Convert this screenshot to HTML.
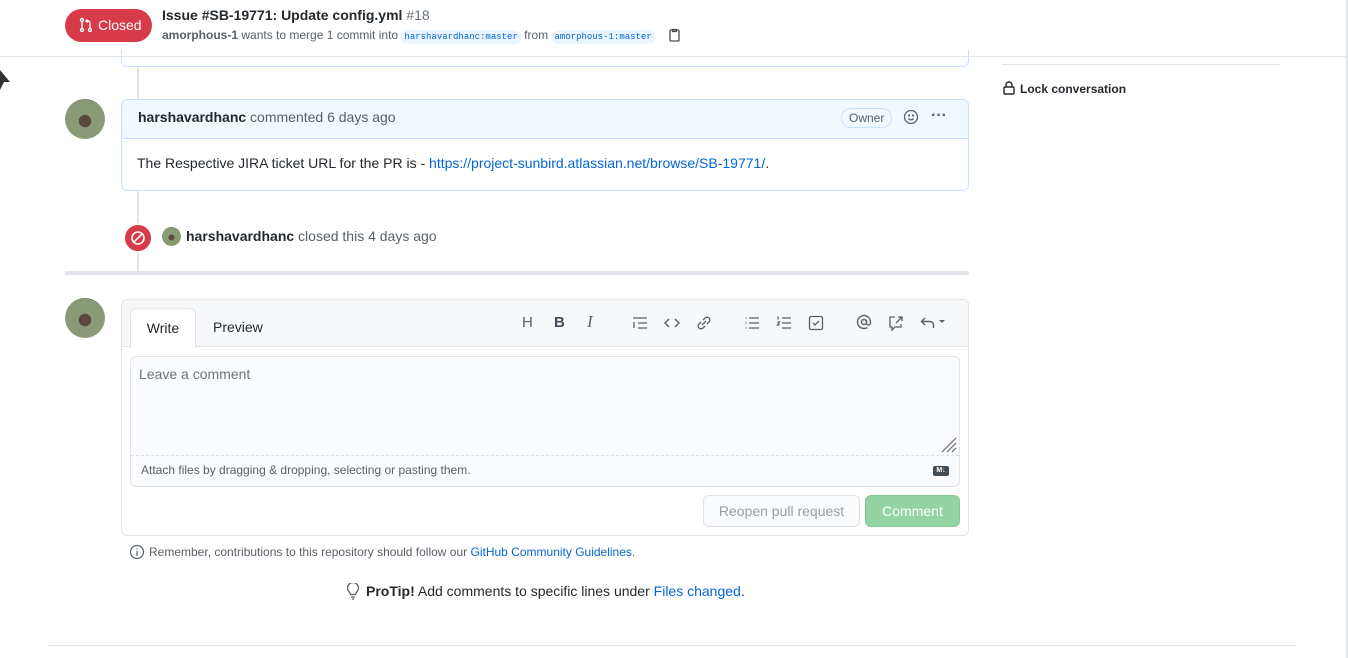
<!DOCTYPE html>
<html><head><meta charset="utf-8"><style>
*{box-sizing:border-box;margin:0;padding:0}
body{width:1348px;height:658px;overflow:hidden;background:#fff;font-family:"Liberation Sans",sans-serif;font-size:14px;color:#24292e;position:relative}
.a{position:absolute}
.av{position:absolute;width:40px;height:40px;border-radius:50%;background:radial-gradient(circle at 50% 55%,#5a4a3c 0 20%,#8a9a76 22% 70%,#6d7e62 72%)}
.code{font-family:"Liberation Mono",monospace;font-size:9px;color:#0366d6;background:#eaf5ff;border-radius:6px;padding:2px 3px}
.ic{position:absolute;top:314px;color:#586069;font-size:15px}
</style></head><body>
<div class="a" style="left:0;top:56px;width:1348px;height:1px;background:#e1e4e8"></div>
<div class="a" style="left:65px;top:9px;width:87px;height:33px;border-radius:17px;background:#d73a49;color:#fff;font-size:14px;line-height:33px;padding-left:33px">Closed</div>
<svg class="a" style="left:78px;top:17px" width="16" height="16" viewBox="0 0 16 16" fill="none" stroke="#fff" stroke-width="1.4"><circle cx="4" cy="3" r="1.5"/><circle cx="4" cy="13" r="1.5"/><circle cx="12" cy="13" r="1.5"/><path d="M4 4.5v7M12 11.5V6a2 2 0 0 0-2-2H8M9.5 2.5L8 4l1.5 1.5"/></svg>
<div class="a" style="left:162px;top:7px;font-size:14px;font-weight:bold">Issue #SB-19771: Update config.yml <span style="font-weight:normal;color:#6a737d">#18</span></div>
<div class="a" style="left:162px;top:28px;font-size:12px;color:#586069"><b style="color:#586069">amorphous-1</b> wants to merge 1 commit into <span class="code">harshavardhanc:master</span> from <span class="code">amorphous-1:master</span></div>
<svg class="a" style="left:668px;top:28px" width="14" height="14" viewBox="0 0 14 14" fill="none" stroke="#444d56" stroke-width="1.3"><rect x="2" y="2" width="9" height="11" rx="1"/><path d="M4.5 1.5h4v2h-4z"/></svg>
<div class="a" style="left:1346px;top:0;width:2px;height:658px;background:#e1e4e8"></div>
<svg class="a" style="left:0;top:70px" width="12" height="22"><path d="M0 0L10 12H4L0 20z" fill="#333"/></svg>
<div class="a" style="left:121px;top:50px;width:848px;height:17px;border:1px solid #c8e1ff;border-top:none;border-radius:0 0 6px 6px"></div>
<div class="a" style="left:137px;top:67px;width:2px;height:205px;background:#e1e4e8"></div>
<div class="a" style="left:1002px;top:64px;width:279px;height:1px;background:#e1e4e8"></div>
<svg class="a" style="left:1003px;top:81px" width="12" height="14" viewBox="0 0 12 14" fill="none" stroke="#24292e" stroke-width="1.4"><rect x="1" y="6" width="10" height="7" rx="1"/><path d="M3 6V4a3 3 0 0 1 6 0v2"/></svg>
<div class="a" style="left:1020px;top:82px;font-size:12px;font-weight:bold">Lock conversation</div>
<div class="av" style="left:65px;top:99px"></div>
<div class="a" style="left:121px;top:99px;width:848px;height:92px;border:1px solid #c8e1ff;border-radius:6px;background:#fff"></div>
<div class="a" style="left:122px;top:100px;width:846px;height:39px;background:#f1f8ff;border-bottom:1px solid #c8e1ff;border-radius:6px 6px 0 0"></div>
<div class="a" style="left:138px;top:109px;font-size:14px;color:#586069"><b style="color:#24292e">harshavardhanc</b> commented 6 days ago</div>
<div class="a" style="left:841px;top:108px;height:20px;padding:0 7px;border:1px solid #c8e1ff;border-radius:10px;font-size:12px;line-height:18px;color:#586069">Owner</div>
<svg class="a" style="left:903px;top:109px" width="16" height="16" viewBox="0 0 16 16" fill="none" stroke="#586069" stroke-width="1.3"><circle cx="8" cy="8" r="6.5"/><path d="M5.5 9.5a3 3 0 0 0 5 0"/><circle cx="6" cy="6.5" r=".5" fill="#586069"/><circle cx="10" cy="6.5" r=".5" fill="#586069"/></svg>
<div class="a" style="left:931px;top:107px;font-size:16px;color:#586069;font-weight:bold">···</div>
<div class="a" style="left:137px;top:155px;font-size:14px">The Respective JIRA ticket URL for the PR is - <span style="color:#0366d6">https://project-sunbird.atlassian.net/browse/SB-19771/</span>.</div>
<div class="a" style="left:123px;top:223px;width:30px;height:30px;border-radius:50%;background:#d73a49;border:2px solid #fff"></div>
<svg class="a" style="left:130px;top:230px" width="16" height="16" viewBox="0 0 16 16" fill="none" stroke="#fff" stroke-width="1.6"><circle cx="8" cy="8" r="6"/><path d="M3.8 12.2l8.4-8.4"/></svg>
<div class="av" style="left:162px;top:227px;width:19px;height:19px"></div>
<div class="a" style="left:186px;top:228px;font-size:14px;color:#586069"><b style="color:#24292e">harshavardhanc</b> closed this 4 days ago</div>
<div class="a" style="left:65px;top:271px;width:904px;height:4px;background:#e1e4e8"></div>
<div class="av" style="left:65px;top:298px"></div>
<div class="a" style="left:121px;top:299px;width:848px;height:237px;border:1px solid #e1e4e8;border-radius:6px;background:#fff"></div>
<div class="a" style="left:122px;top:300px;width:846px;height:47px;background:#f6f8fa;border-bottom:1px solid #e1e4e8;border-radius:6px 6px 0 0"></div>
<div class="a" style="left:130px;top:308px;width:66px;height:40px;background:#fff;border:1px solid #e1e4e8;border-bottom:none;border-radius:6px 6px 0 0;text-align:center;line-height:38px">Write</div>
<div class="a" style="left:213px;top:319px">Preview</div>
<div class="ic" style="left:522px">H</div>
<div class="ic" style="left:554px;font-weight:bold;color:#444d56">B</div>
<div class="ic" style="left:587px;font-style:italic;font-family:'Liberation Serif',serif;font-size:17px;top:312px">I</div>
<svg class="a" style="left:632px;top:315px" width="16" height="16" viewBox="0 0 16 16" fill="none" stroke="#586069" stroke-width="1.3"><path d="M1 3h14M6 8h9M6 13h9M2 7v6"/></svg>
<svg class="a" style="left:664px;top:315px" width="16" height="16" viewBox="0 0 16 16" fill="none" stroke="#586069" stroke-width="1.4"><path d="M5 4L1 8l4 4M11 4l4 4-4 4"/></svg>
<svg class="a" style="left:696px;top:315px" width="16" height="16" viewBox="0 0 16 16" fill="none" stroke="#586069" stroke-width="1.3"><path d="M7 5l2-2a2.8 2.8 0 0 1 4 4l-2 2M9 11l-2 2a2.8 2.8 0 0 1-4-4l2-2M6 10l4-4"/></svg>
<svg class="a" style="left:744px;top:315px" width="16" height="16" viewBox="0 0 16 16" fill="none" stroke="#586069" stroke-width="1.3"><path d="M5 3h10M5 8h10M5 13h10M1.5 3h1M1.5 8h1M1.5 13h1"/></svg>
<svg class="a" style="left:776px;top:315px" width="16" height="16" viewBox="0 0 16 16" fill="none" stroke="#586069" stroke-width="1.3"><path d="M6 3h9M6 8h9M6 13h9M2 1.5v3M1.5 7h2l-2 3h2"/></svg>
<svg class="a" style="left:808px;top:315px" width="16" height="16" viewBox="0 0 16 16" fill="none" stroke="#586069" stroke-width="1.3"><rect x="1.5" y="1.5" width="13" height="13" rx="1.5"/><path d="M5 8l2 2 4-4"/></svg>
<svg class="a" style="left:856px;top:314px" width="16" height="16" viewBox="0 0 16 16" fill="none" stroke="#586069" stroke-width="1.4"><circle cx="8" cy="8" r="2.5"/><path d="M10.5 6v3a2 2 0 0 0 4 0V8a6.5 6.5 0 1 0-3 5.5"/></svg>
<svg class="a" style="left:888px;top:315px" width="16" height="16" viewBox="0 0 16 16" fill="none" stroke="#586069" stroke-width="1.3"><path d="M7 2H2v10h2v3l3-3h6V9M10 2h4v4M14 2L8 8"/></svg>
<svg class="a" style="left:920px;top:315px" width="28" height="16" viewBox="0 0 28 16" fill="none" stroke="#586069" stroke-width="1.4"><path d="M5 3L1.5 6.5 5 10M1.5 6.5H10a3.5 3.5 0 0 1 3.5 3.5v3"/><path d="M19 5h6l-3 3z" fill="#586069" stroke="none"/></svg>
<div class="a" style="left:130px;top:356px;width:830px;height:131px;background:#fafbfc;border:1px solid #e1e4e8;border-radius:6px"></div>
<div class="a" style="left:131px;top:455px;width:828px;height:1px;border-top:1px dashed #dfe2e5"></div>
<div class="a" style="left:139px;top:366px;color:#6a737d">Leave a comment</div>
<svg class="a" style="left:940px;top:437px" width="18" height="16"><path d="M2 15L16 1M7 15L16 6M12 15L16 11" stroke="#666" stroke-width="1.2"/></svg>
<div class="a" style="left:141px;top:463px;font-size:12px;color:#586069">Attach files by dragging &amp; dropping, selecting or pasting them.</div>
<div class="a" style="left:933px;top:466px;width:16px;height:10px;background:#444d56;border-radius:2px;color:#fff;font-size:7px;font-weight:bold;line-height:10px;text-align:center">M↓</div>
<div class="a" style="left:703px;top:495px;width:157px;height:32px;border:1px solid #dfe2e5;border-radius:6px;background:#fafbfc;color:#959da5;text-align:center;line-height:30px">Reopen pull request</div>
<div class="a" style="left:865px;top:495px;width:95px;height:32px;border-radius:6px;background:#94d3a2;border:1px solid #86c897;color:#fff;text-align:center;line-height:30px">Comment</div>
<svg class="a" style="left:129px;top:544px" width="16" height="16" viewBox="0 0 16 16" fill="none" stroke="#586069" stroke-width="1.2"><circle cx="8" cy="8" r="6.5"/><path d="M8 7v5M8 4.5v1"/></svg>
<div class="a" style="left:149px;top:545px;font-size:12px;color:#586069">Remember, contributions to this repository should follow our <span style="color:#0366d6">GitHub Community Guidelines</span>.</div>
<svg class="a" style="left:346px;top:583px" width="14" height="17" viewBox="0 0 14 17" fill="none" stroke="#586069" stroke-width="1.3"><path d="M4.5 11.5c0-2-3-3.5-3-6.5a5.5 5.5 0 0 1 11 0c0 3-3 4.5-3 6.5zM5 14h4M6 16h2"/></svg>
<div class="a" style="left:366px;top:583px;font-size:14px"><b>ProTip!</b> Add comments to specific lines under <span style="color:#0366d6">Files changed</span>.</div>
<div class="a" style="left:48px;top:645px;width:1248px;height:1px;background:#e1e4e8"></div>
</body></html>
